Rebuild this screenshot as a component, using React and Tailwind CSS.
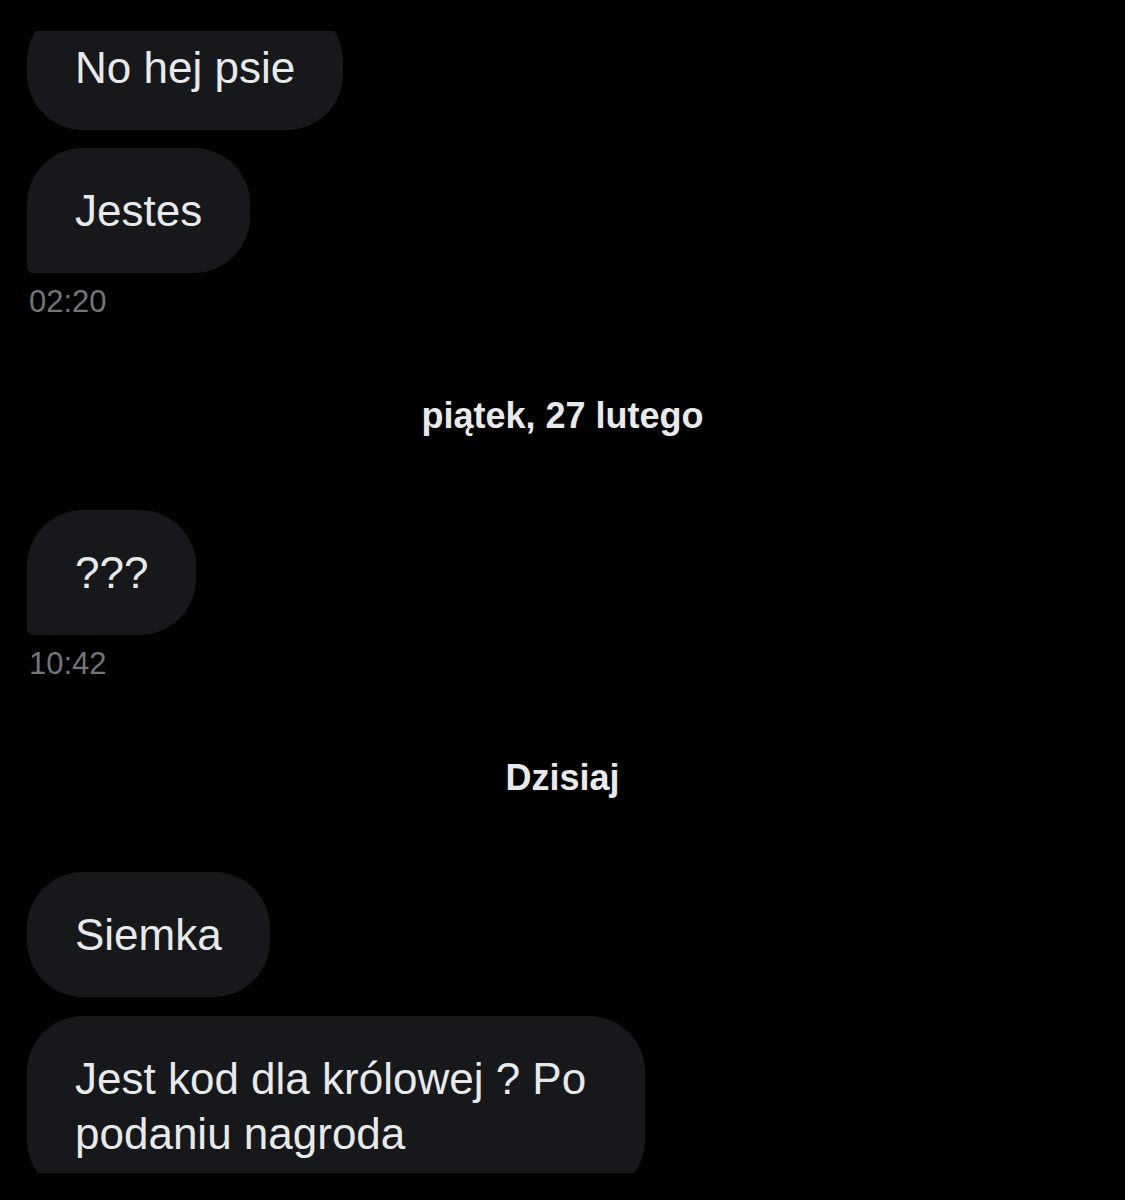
import React from 'react';

const font = { fontFamily: '"Liberation Sans", Arial, sans-serif' };

const Bubble = ({ text, last, className = '' }) => (
  <div className={`flex ${className}`}>
    <div
      className={`max-w-[618px] bg-[#16181c] text-[#e7e9ea] text-[44px] leading-[55px] px-[48px] py-[35px] rounded-[56px] ${
        last ? 'rounded-bl-[6px]' : ''
      }`}
    >
      {text}
    </div>
  </div>
);

const Time = ({ value }) => (
  <div className="mt-[9px] text-[31px] leading-[40px] text-[#71767b] pl-[2px]">{value}</div>
);

const DayDivider = ({ label }) => (
  <div className="my-[72px] text-center text-[36px] leading-[44px] font-bold text-[#e7e9ea]">{label}</div>
);

const App = () => {
  return (
    <div className="w-[1125px] h-[1200px] bg-black flex flex-col" style={font}>
      <div className="h-[31px] shrink-0" />
      <div className="h-[1142px] shrink-0 overflow-hidden px-[27px]">
        <div className="-mt-[26px]">
          <Bubble text="No hej psie" />
          <Bubble text="Jestes" last className="mt-[18px]" />
          <Time value="02:20" />

          <DayDivider label="piątek, 27 lutego" />

          <Bubble text="???" last />
          <Time value="10:42" />

          <DayDivider label="Dzisiaj" />

          <Bubble text="Siemka" />
          <Bubble text="Jest kod dla królowej ? Po podaniu nagroda" className="mt-[19px]" />
        </div>
      </div>
    </div>
  );
};

export default App;
